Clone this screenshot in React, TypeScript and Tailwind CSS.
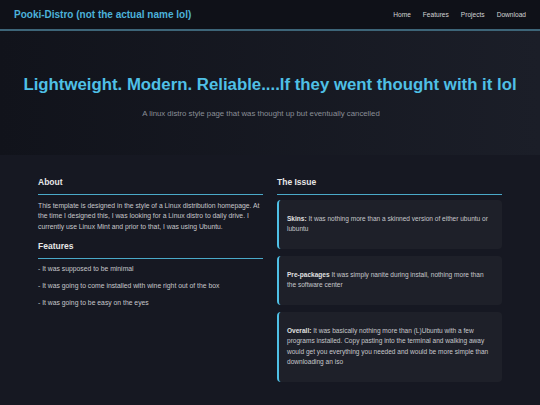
import React from "react";

export default function App() {
  const font = { fontFamily: '"Liberation Sans", Arial, sans-serif' };
  const card =
    "rounded-[4px] border-l-2 border-[#4fc0e6] bg-[#1e2029] pl-[8px] pr-[3px] py-[14px] text-[6.55px] leading-[10.5px] text-[#c6c7cb]";
  return (
    <div className="w-[540px] h-[405px] overflow-hidden bg-[#161822]" style={font}>
      <header className="h-[31px] flex items-center justify-between px-[14px] bg-[#0f1118] border-b-2 border-[#3d6578]">
        <div className="text-[10px] font-bold text-[#4cb2da]">Pooki-Distro (not the actual name lol)</div>
        <nav className="flex gap-[12px] text-[6.6px] text-[#d4d4d4]">
          <span>Home</span>
          <span>Features</span>
          <span>Projects</span>
          <span>Download</span>
        </nav>
      </header>
      <section className="h-[124px] flex flex-col items-center justify-center bg-gradient-to-r from-[#11131b] to-[#1b1e28]">
        <h1 className="text-[16.8px] font-bold text-[#4fc0e6] mt-[8px] leading-[20px]">
          Lightweight. Modern. Reliable....If they went thought with it lol
        </h1>
        <p className="text-[7.8px] text-[#8a8e97] mt-[13px] pr-[18px]">
          A linux distro style page that was thought up but eventually cancelled
        </p>
      </section>
      <main className="px-[38px] pt-[21px] grid grid-cols-2 gap-[14px]">
        <div>
          <h2 className="text-[8.5px] font-bold text-[#e6e6e6] pb-[5px] border-b border-[#4aa9c9]">About</h2>
          <p className="text-[6.8px] leading-[10.5px] text-[#c6c7cb] mt-[6px]">
            This template is designed in the style of a Linux distribution homepage. At the time I designed this, I was looking for a Linux distro to daily drive. I currently use Linux Mint and prior to that, I was using Ubuntu.
          </p>
          <h2 className="text-[8.5px] font-bold text-[#e6e6e6] pb-[5px] border-b border-[#4aa9c9] mt-[8px]">Features</h2>
          <ul className="text-[6.8px] leading-[10.5px] text-[#c6c7cb] mt-[5px] flex flex-col gap-[6.5px]">
            <li>- It was supposed to be minimal</li>
            <li>- It was going to come installed with wine right out of the box</li>
            <li>- It was going to be easy on the eyes</li>
          </ul>
        </div>
        <div>
          <h2 className="text-[8.5px] font-bold text-[#e6e6e6] pb-[5px] border-b border-[#4aa9c9]">The Issue</h2>
          <div className="mt-[5px] flex flex-col gap-[7px]">
            <div className={card}>
              <span className="whitespace-nowrap">
                <b className="text-[#e0e0e0]">Skins:</b> It was nothing more than a skinned version of either ubuntu or
              </span>
              <br />
              lubuntu
            </div>
            <div className={card}>
              <b className="text-[#e0e0e0]">Pre-packages</b> It was simply nanite during install, nothing more than
              <br />
              the software center
            </div>
            <div className={card}>
              <b className="text-[#e0e0e0]">Overall:</b> It was basically nothing more than (L)Ubuntu with a few programs installed. Copy pasting into the terminal and walking away would get you everything you needed and would be more simple than downloading an iso
            </div>
          </div>
        </div>
      </main>
    </div>
  );
}
